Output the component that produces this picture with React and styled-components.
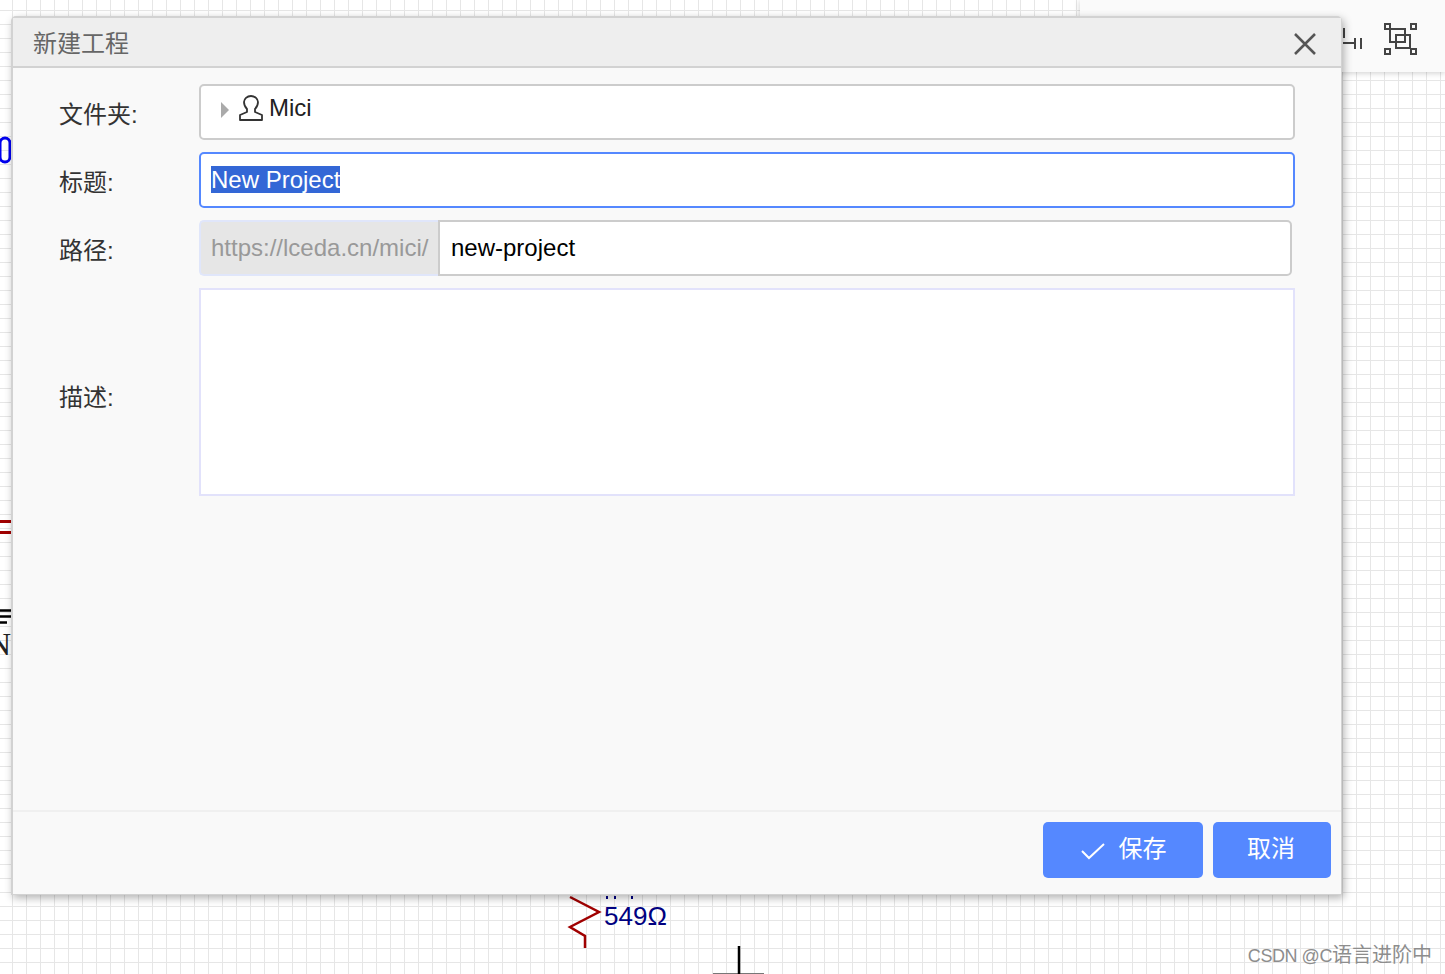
import React from "react";
import styled, { createGlobalStyle } from "styled-components";

const GlobalStyle = createGlobalStyle`
  html, body {
    margin: 0;
    padding: 0;
    height: 100%;
    overflow: hidden;
  }
  body {
    font-family: "Liberation Sans", "Noto Sans CJK SC", sans-serif;
  }
`;

const Canvas = styled.div`
  position: relative;
  width: 1445px;
  height: 974px;
  overflow: hidden;
  background-color: #ffffff;
  background-image:
    linear-gradient(to right, #e6e6e6 1px, transparent 1px),
    linear-gradient(to bottom, #e6e6e6 1px, transparent 1px);
  background-size: 14px 14px;
  background-position: 12px 10px;
`;

const Toolbar = styled.div`
  position: absolute;
  top: 0;
  right: 0;
  width: 365px;
  height: 72px;
  background: #fafafa;
  box-shadow: 0 1px 6px rgba(0, 0, 0, 0.2);
`;

const Drawing = styled.svg`
  position: absolute;
  left: ${(p) => p.$x}px;
  top: ${(p) => p.$y}px;
  overflow: visible;
`;

const SchematicText = styled.span`
  position: absolute;
  left: ${(p) => p.$x}px;
  top: ${(p) => p.$y}px;
  color: ${(p) => p.$color};
  font-family: ${(p) => (p.$serif ? '"Liberation Serif", serif' : "inherit")};
  font-size: ${(p) => (p.$serif ? 32 : 26)}px;
  line-height: 30px;
`;

const Watermark = styled.div`
  position: absolute;
  right: 13px;
  bottom: 6px;
  font-size: 20px;
  line-height: 24px;
  color: #8d8d8d;
`;

const WatermarkLatin = styled.span`
  font-size: 18px;
  letter-spacing: -0.45px;
`;

const Dialog = styled.div`
  position: absolute;
  left: 11px;
  top: 16px;
  width: 1331px;
  height: 879px;
  box-sizing: border-box;
  display: flex;
  flex-direction: column;
  background: #f9f9f9;
  border: 1px solid #d2d2d2;
  border-width: 2px 1px 1px 2px;
  border-radius: 5px 5px 0 0;
  box-shadow: 2px 3px 8px rgba(0, 0, 0, 0.3);
`;

const Header = styled.div`
  flex: none;
  height: 50px;
  box-sizing: border-box;
  display: flex;
  align-items: center;
  justify-content: space-between;
  padding: 0 24px 2px 20px;
  background: #eeeeee;
  border-bottom: 2px solid #d2d2d2;
  color: #666666;
  font-size: 24px;
`;

const CloseIcon = styled.svg`
  display: block;
  width: 24px;
  height: 24px;
  margin-top: 6px;
`;

const Body = styled.div`
  flex: 1;
  display: flex;
  flex-direction: column;
  gap: 12px;
  padding: 16px 46px 0 46px;
`;

const Row = styled.div`
  display: flex;
  align-items: center;
`;

const Label = styled.label`
  flex: none;
  width: 140px;
  padding-top: ${(p) => (p.$low ? 6 : 0)}px;
  font-size: 24px;
  color: #333333;
`;

const Field = styled.div`
  width: 1096px;
  height: 56px;
  box-sizing: border-box;
  display: flex;
  align-items: center;
  padding: 0 10px;
  background: #ffffff;
  border: 2px solid ${(p) => (p.$focus ? "#5588ff" : "#cccccc")};
  border-radius: 5px;
  font-size: 24px;
  color: #222222;
`;

const TreeField = styled(Field)`
  padding: 0 0 8px 20px;
`;

const Arrow = styled.span`
  width: 0;
  height: 0;
  margin: 4px 10px 0 0;
  border-left: 8px solid #aaaaaa;
  border-top: 8px solid transparent;
  border-bottom: 8px solid transparent;
`;

const UserIcon = styled.svg`
  display: block;
  width: 24px;
  height: 26px;
  margin-right: 6px;
`;

const Selected = styled.span`
  background: #3367d6;
  color: #ffffff;
  line-height: 27px;
  margin-top: -2px;
`;

const PathGroup = styled.div`
  width: 1093px;
  height: 56px;
  display: flex;
`;

const Addon = styled.div`
  flex: none;
  width: 239px;
  box-sizing: border-box;
  display: flex;
  align-items: center;
  padding-left: 10px;
  background: #e6e6e6;
  border: 2px solid #e0e6fa;
  border-right: none;
  border-radius: 5px 0 0 5px;
  font-size: 24px;
  color: #999999;
`;

const PathInput = styled.div`
  flex: 1;
  box-sizing: border-box;
  display: flex;
  align-items: center;
  padding-left: 11px;
  background: #ffffff;
  border: 2px solid #cccccc;
  border-radius: 0 5px 5px 0;
  font-size: 24px;
  color: #000000;
`;

const Description = styled.div`
  width: 1096px;
  height: 208px;
  box-sizing: border-box;
  background: #ffffff;
  border: 2px solid #e2e2fb;
`;

const Footer = styled.div`
  flex: none;
  height: 84px;
  box-sizing: border-box;
  display: flex;
  justify-content: flex-end;
  gap: 10px;
  padding: 10px 10px 0 0;
  border-top: 2px solid #f0f0f0;
`;

const Button = styled.button`
  width: ${(p) => p.$width}px;
  height: 56px;
  box-sizing: border-box;
  display: flex;
  align-items: center;
  justify-content: center;
  gap: 13px;
  padding: 0 ${(p) => (p.$icon ? 0 : 2)}px 8px 0;
  background: #5588ff;
  border: none;
  border-radius: 5px;
  color: #ffffff;
  font-family: inherit;
  font-size: 24px;
`;

const CheckIcon = styled.svg`
  display: block;
  width: 26px;
  height: 20px;
  margin-top: 10px;
`;

export default function App() {
  return (
    <>
      <GlobalStyle />
      <Canvas>
        <Toolbar>
          <Drawing $x={0} $y={0} width="365" height="72">
            <g fill="none" stroke="#444444" strokeWidth="2">
              <path d="M264 28v10M263 43h12M275 38v11M281 38v11" />
              <rect x="305" y="24" width="5" height="5" />
              <rect x="331" y="24" width="5" height="5" />
              <rect x="305" y="49" width="5" height="5" />
              <rect x="331" y="49" width="5" height="5" />
              <rect x="310" y="29" width="15" height="13" />
              <rect x="316" y="35" width="14" height="13" />
            </g>
          </Drawing>
        </Toolbar>

        <Drawing $x={0} $y={129} width="12" height="40">
          <rect
            x="0"
            y="9"
            width="10"
            height="24"
            rx="5"
            fill="none"
            stroke="#0000ee"
            strokeWidth="3"
          />
        </Drawing>
        <Drawing $x={0} $y={515} width="12" height="30">
          <path d="M0 6.500h12M0 17.500h12" stroke="#a00000" strokeWidth="3" />
        </Drawing>
        <Drawing $x={0} $y={600} width="12" height="30">
          <path d="M0 10.500h12M0 16.500h12M0 22.500h7" stroke="#000000" strokeWidth="2.500" />
        </Drawing>
        <SchematicText $serif $x={-12} $y={629} $color="#222222">
          N.
        </SchematicText>

        <Drawing $x={560} $y={890} width="60" height="70">
          <path
            d="M10 7l29 15-29 15 15 9v12"
            fill="none"
            stroke="#a00000"
            strokeWidth="2.500"
          />
          <path d="M47 6v3M55 6v3M72 6v3" stroke="#000080" strokeWidth="2" />
        </Drawing>
        <SchematicText $x={604} $y={901} $color="#000080">
          549Ω
        </SchematicText>
        <Drawing $x={710} $y={944} width="60" height="30">
          <path d="M3 29.500h51" stroke="#777777" strokeWidth="1" />
          <path d="M29 2v28" stroke="#000000" strokeWidth="2.500" />
        </Drawing>
        <Watermark>
          <WatermarkLatin>CSDN @C</WatermarkLatin>语言进阶中
        </Watermark>

        <Dialog>
          <Header>
            新建工程
            <CloseIcon viewBox="0 0 24 24">
              <path d="M2 2l20 20M22 2L2 22" stroke="#555555" strokeWidth="2.500" fill="none" />
            </CloseIcon>
          </Header>
          <Body>
            <Row>
              <Label>文件夹:</Label>
              <TreeField>
                <Arrow />
                <UserIcon viewBox="0 0 24 26">
                  <path
                    d="M8 14c-2-2-3-4-3-7 0-3 3-6 7-6s7 3 7 6c0 3-1 5-3 7v3l7 3v5H1v-5l7-3z"
                    fill="none"
                    stroke="#333333"
                    strokeWidth="1.800"
                    strokeLinejoin="round"
                  />
                </UserIcon>
                Mici
              </TreeField>
            </Row>
            <Row>
              <Label>标题:</Label>
              <Field $focus>
                <Selected>New Project</Selected>
              </Field>
            </Row>
            <Row>
              <Label>路径:</Label>
              <PathGroup>
                <Addon>https://lceda.cn/mici/</Addon>
                <PathInput>new-project</PathInput>
              </PathGroup>
            </Row>
            <Row>
              <Label $low>描述:</Label>
              <Description />
            </Row>
          </Body>
          <Footer>
            <Button $icon $width={160}>
              <CheckIcon viewBox="0 0 26 20">
                <path d="M2 10l7 7L24 3" fill="none" stroke="#ffffff" strokeWidth="2" />
              </CheckIcon>
              保存
            </Button>
            <Button $width={118}>取消</Button>
          </Footer>
        </Dialog>
      </Canvas>
    </>
  );
}
